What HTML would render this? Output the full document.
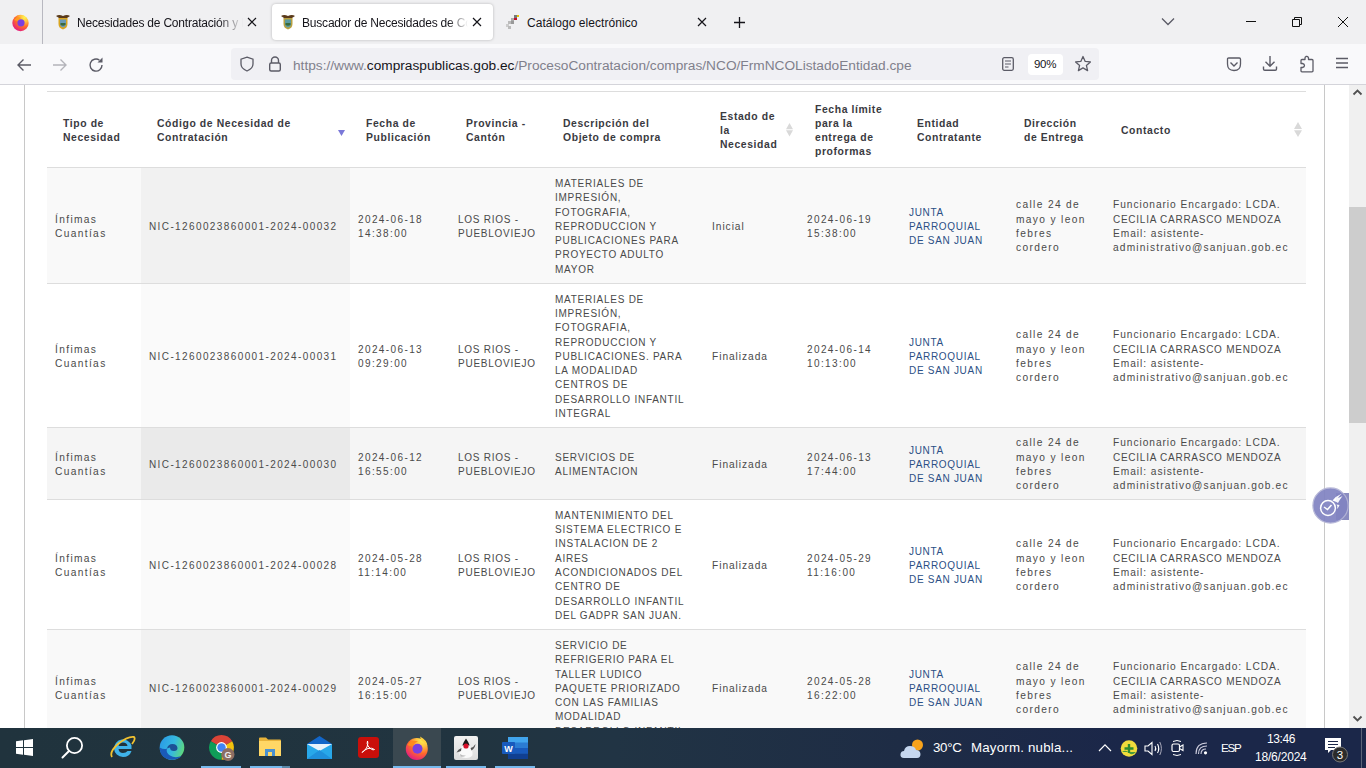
<!DOCTYPE html>
<html><head><meta charset="utf-8">
<style>
*{box-sizing:border-box}
html,body{margin:0;padding:0;width:1366px;height:768px;overflow:hidden;background:#fff;font-family:"Liberation Sans",sans-serif;position:relative}
.abs{position:absolute}
svg{display:block}
#tabs{left:0;top:0;width:1366px;height:44px;background:#f0f0f2}
#nav{left:0;top:44px;width:1366px;height:41px;background:#f9f9fb;border-bottom:1px solid #d4d4da}
.tabtxt{position:absolute;white-space:nowrap;font-size:12px;letter-spacing:-0.2px;color:#15141a;line-height:15px}
.urltxt{white-space:nowrap;font-size:13.7px;line-height:16px}
.ttxt{white-space:nowrap;color:#fff;line-height:15px}
#content{left:0;top:85px;width:1366px;height:643px;background:#fff;overflow:hidden}
#taskbar{left:0;top:728px;width:1366px;height:40px;background:linear-gradient(90deg,#20333d 0%,#213440 35%,#213444 45%,#1e2c45 66%,#1b2749 82%,#1b2749 100%)}
table{border-collapse:collapse;table-layout:fixed;position:absolute;left:47px;top:6px;width:1259px}
td,th{font-family:"Liberation Sans",sans-serif;vertical-align:middle;text-align:left;white-space:nowrap;padding:3px 0 0 8px;overflow:hidden}
th{font-weight:bold;font-size:10.4px;line-height:14.2px;color:#3a3a3f;letter-spacing:0.6px;padding-left:16px;position:relative}
td{font-size:10.2px;line-height:14.3px;color:#4a4a4a}
tr.h{height:76px;border-top:1px solid #ddd;border-bottom:1px solid #ddd}
tr.r{border-bottom:1px solid #ddd}
.odd td{background:#f9f9f9}
.odd td.s{background:#f1f1f1}
.even td{background:#fff}
.even td.s{background:#fafafa}
.hov td{background:#f5f5f5}
.hov td.s{background:#eaeaea}
.c{letter-spacing:0.75px;font-size:10px}
.d{letter-spacing:1.39px;font-size:10px}
.l{letter-spacing:0.95px}
.l2{letter-spacing:1.35px}
.l3{letter-spacing:1.15px}
.c2{letter-spacing:0.74px;font-size:10px}
.lnk{color:#2b4f85;letter-spacing:0.7px;font-size:10px}
.arr{position:absolute;width:0;height:0;border-left:3.5px solid transparent;border-right:3.5px solid transparent}
</style></head><body>

<div id="tabs" class="abs">
 <!-- firefox logo -->
 <svg class="abs" style="left:11px;top:13px" width="19" height="19" viewBox="0 0 19 19">
  <defs><radialGradient id="ffg" cx="0.75" cy="0.15" r="0.95"><stop offset="0" stop-color="#fff44f"/><stop offset="0.3" stop-color="#ffbd3f"/><stop offset="0.6" stop-color="#ff6a2a"/><stop offset="1" stop-color="#e31587"/></radialGradient></defs>
  <circle cx="9.5" cy="10" r="8.2" fill="url(#ffg)"/>
  <circle cx="10" cy="9.8" r="3.6" fill="#7a3fe0"/>
  <path d="M3 7Q6 3 10.5 5Q8 5.5 7 7.5Q5 8 3 7Z" fill="#ff9a1e"/>
 </svg>
 <div class="abs" style="left:42px;top:0;width:1px;height:44px;background:#b8b8c0"></div>
 <!-- tab1 -->
 <svg class="abs" style="left:55px;top:14px" width="16" height="16" viewBox="0 0 16 16">
  <path d="M1 2 Q4 0 8 2 Q12 0 15 2 L12 4 L4 4Z" fill="#5a3a1a"/>
  <path d="M3.5 4 H12.5 V10 Q12.5 14 8 15.5 Q3.5 14 3.5 10Z" fill="#d9a520"/>
  <path d="M5 5.5 H11 V10 Q11 12.5 8 13.5 Q5 12.5 5 10Z" fill="#6a9ab8"/>
  <path d="M5.5 9 H10.5 V11 Q8 12.5 5.5 11Z" fill="#3a6a3a"/>
 </svg>
 <div class="tabtxt" style="left:77px;top:16px;width:166px;overflow:hidden;-webkit-mask-image:linear-gradient(90deg,#000 85%,transparent 100%)">Necesidades de Contratación y Reportes</div>
 <svg class="abs" style="left:247px;top:17px" width="10" height="10" viewBox="0 0 10 10"><path d="M1 1L9 9M9 1L1 9" stroke="#15141a" stroke-width="1.2"/></svg>
 <!-- active tab -->
 <div class="abs" style="left:272px;top:4px;width:221px;height:36px;background:#fff;border-radius:4px;box-shadow:0 0 3px rgba(0,0,0,0.25)"></div>
 <svg class="abs" style="left:280px;top:14px" width="16" height="16" viewBox="0 0 16 16">
  <path d="M1 2 Q4 0 8 2 Q12 0 15 2 L12 4 L4 4Z" fill="#5a3a1a"/>
  <path d="M3.5 4 H12.5 V10 Q12.5 14 8 15.5 Q3.5 14 3.5 10Z" fill="#b8a040"/>
  <path d="M5 5.5 H11 V10 Q11 12.5 8 13.5 Q5 12.5 5 10Z" fill="#5a9aa0"/>
  <path d="M5.5 9 H10.5 V11 Q8 12.5 5.5 11Z" fill="#3a6a3a"/>
 </svg>
 <div class="tabtxt" style="left:302px;top:16px;width:166px;overflow:hidden;-webkit-mask-image:linear-gradient(90deg,#000 88%,transparent 100%)">Buscador de Necesidades de Contratación</div>
 <svg class="abs" style="left:472px;top:17px" width="10" height="10" viewBox="0 0 10 10"><path d="M1 1L9 9M9 1L1 9" stroke="#15141a" stroke-width="1.2"/></svg>
 <!-- tab3 -->
 <svg class="abs" style="left:505px;top:14px" width="16" height="16" viewBox="0 0 16 16">
  <rect x="9" y="1" width="3" height="3" fill="#777"/><rect x="12" y="1" width="2" height="2" fill="#e6c200"/>
  <rect x="6" y="4" width="3" height="3" fill="#aaa"/><rect x="9" y="4" width="3" height="2" fill="#c0102a"/>
  <rect x="3" y="7" width="3" height="3" fill="#bbb"/><rect x="6" y="7" width="3" height="3" fill="#999"/>
  <rect x="1" y="10" width="3" height="3" fill="#ccc"/><rect x="3" y="12" width="3" height="3" fill="#bbb"/>
 </svg>
 <div class="tabtxt" style="left:527px;top:16px;letter-spacing:0.05px">Catálogo electrónico</div>
 <svg class="abs" style="left:697px;top:17px" width="10" height="10" viewBox="0 0 10 10"><path d="M1 1L9 9M9 1L1 9" stroke="#15141a" stroke-width="1.2"/></svg>
 <svg class="abs" style="left:733px;top:16px" width="13" height="13" viewBox="0 0 13 13"><path d="M6.5 1V12M1 6.5H12" stroke="#15141a" stroke-width="1.3"/></svg>
 <!-- window controls -->
 <svg class="abs" style="left:1161px;top:17px" width="14" height="9" viewBox="0 0 14 9"><path d="M1 1.5L7 7.5L13 1.5" stroke="#5b5b66" stroke-width="1.3" fill="none"/></svg>
 <div class="abs" style="left:1246px;top:21px;width:10px;height:1px;background:#111"></div>
 <svg class="abs" style="left:1291px;top:16px" width="12" height="12" viewBox="0 0 12 12"><path d="M1.5 3.5H8.5V10.5H1.5Z M3.5 3.5V1.5H10.5V8.5H8.5" stroke="#111" stroke-width="1" fill="none"/></svg>
 <svg class="abs" style="left:1337px;top:16px" width="12" height="12" viewBox="0 0 12 12"><path d="M1 1L11 11M11 1L1 11" stroke="#111" stroke-width="1"/></svg>
</div>
<div id="nav" class="abs">
 <svg class="abs" style="left:16px;top:13px" width="16" height="16" viewBox="0 0 16 16"><path d="M15 8H2M7.5 2.5L2 8L7.5 13.5" stroke="#5b5b66" stroke-width="1.4" fill="none"/></svg>
 <svg class="abs" style="left:52px;top:13px" width="16" height="16" viewBox="0 0 16 16"><path d="M1 8H14M8.5 2.5L14 8L8.5 13.5" stroke="#b4b4ba" stroke-width="1.4" fill="none"/></svg>
 <svg class="abs" style="left:88px;top:13px" width="16" height="16" viewBox="0 0 16 16"><path d="M14 8A6 6 0 1 1 11.5 3.2" stroke="#5b5b66" stroke-width="1.4" fill="none"/><path d="M9.5 5.5L14.5 5.5L14.5 0.5Z" fill="#5b5b66"/></svg>
 <div class="abs" style="left:231px;top:4px;width:868px;height:32px;background:#f0f0f4;border-radius:4px"></div>
 <svg class="abs" style="left:239px;top:12px" width="16" height="16" viewBox="0 0 16 16"><path d="M8 1.2L14 3.2V8Q14 12.5 8 15Q2 12.5 2 8V3.2Z" stroke="#5b5b66" stroke-width="1.3" fill="none"/></svg>
 <svg class="abs" style="left:267px;top:11px" width="16" height="18" viewBox="0 0 16 18"><path d="M4.5 8V5.5A3.5 3.5 0 0 1 11.5 5.5V8" stroke="#5b5b66" stroke-width="1.4" fill="none"/><rect x="2.7" y="8" width="10.6" height="8" rx="1.5" stroke="#5b5b66" stroke-width="1.4" fill="none"/></svg>
 <div class="abs urltxt" style="left:293px;top:14px"><span style="color:#80808c">https://www.</span><span style="color:#15141a">compraspublicas.gob.ec</span><span style="color:#80808c">/ProcesoContratacion/compras/NCO/FrmNCOListadoEntidad.cpe</span></div>
 <svg class="abs" style="left:1001px;top:12px" width="14" height="16" viewBox="0 0 14 16"><rect x="1.7" y="1.7" width="10.6" height="12.6" rx="1.5" stroke="#5b5b66" stroke-width="1.3" fill="none"/><path d="M4 5H10M4 8H10M4 11H7.5" stroke="#5b5b66" stroke-width="1.2"/></svg>
 <div class="abs" style="left:1028px;top:10px;width:35px;height:21px;background:#fff;border-radius:4px"></div>
 <div class="abs" style="left:1034px;top:14px;font-size:11.5px;color:#15141a;letter-spacing:-0.3px">90%</div>
 <svg class="abs" style="left:1074px;top:11px" width="18" height="18" viewBox="0 0 18 18"><path d="M9 1.5L11.2 6.4L16.4 6.9L12.4 10.4L13.6 15.6L9 12.9L4.4 15.6L5.6 10.4L1.6 6.9L6.8 6.4Z" stroke="#5b5b66" stroke-width="1.3" fill="none" stroke-linejoin="round"/></svg>
 <svg class="abs" style="left:1226px;top:13px" width="16" height="15" viewBox="0 0 16 15"><path d="M1.5 2.2Q1.5 1 2.7 1H13.3Q14.5 1 14.5 2.2V7Q14.5 13.5 8 13.5Q1.5 13.5 1.5 7Z" stroke="#5b5b66" stroke-width="1.3" fill="none"/><path d="M4.5 5.5L8 9L11.5 5.5" stroke="#5b5b66" stroke-width="1.4" fill="none"/></svg>
 <svg class="abs" style="left:1262px;top:11px" width="16" height="17" viewBox="0 0 16 17"><path d="M8 1V11M3.5 6.8L8 11.3L12.5 6.8" stroke="#5b5b66" stroke-width="1.4" fill="none"/><path d="M1.5 11.5V14Q1.5 15.3 2.8 15.3H13.2Q14.5 15.3 14.5 14V11.5" stroke="#5b5b66" stroke-width="1.4" fill="none"/></svg>
 <svg class="abs" style="left:1299px;top:11px" width="16" height="18" viewBox="0 0 16 18"><path d="M7 1.5Q9 1 9.5 3V4.5H13Q14 4.5 14 5.5V16Q14 16.8 13 16.8H3Q2 16.8 2 16V12.5H3.5Q5.5 12 5.5 10.5Q5.5 9 3.5 8.5H2V5.5Q2 4.5 3 4.5H6V3Q6 2 7 1.5Z" stroke="#5b5b66" stroke-width="1.3" fill="none" stroke-linejoin="round"/></svg>
 <svg class="abs" style="left:1335px;top:13px" width="14" height="12" viewBox="0 0 14 12"><path d="M1 1.5H13M1 6H13M1 10.5H13" stroke="#5b5b66" stroke-width="1.3"/></svg>
</div>

<div id="content" class="abs">
 <div class="abs" style="left:24px;top:0;width:1px;height:643px;background:#c8c8c8"></div>
 <div class="abs" style="left:1324px;top:0;width:1px;height:643px;background:#c8c8c8"></div>
 <div class="abs" style="left:1349px;top:0;width:17px;height:643px;background:#f0f0f0"></div>
 <div class="abs" style="left:1349px;top:122px;width:17px;height:216px;background:#cdcdcd"></div>
 <svg class="abs" style="left:1352px;top:3px" width="11" height="8" viewBox="0 0 11 8"><path d="M1.5 6.5L5.5 2.5L9.5 6.5" stroke="#505050" stroke-width="1.8" fill="none"/></svg>
 <svg class="abs" style="left:1352px;top:630px" width="11" height="8" viewBox="0 0 11 8"><path d="M1.5 1.5L5.5 5.5L9.5 1.5" stroke="#505050" stroke-width="1.8" fill="none"/></svg>
<table>
<colgroup><col style="width:94px"><col style="width:209px"><col style="width:100px"><col style="width:97px"><col style="width:157px"><col style="width:95px"><col style="width:102px"><col style="width:107px"><col style="width:97px"><col style="width:201px"></colgroup>
<tr class="h">
<th>Tipo de<br>Necesidad</th>
<th>Código de Necesidad de<br>Contratación</th>
<th>Fecha de<br>Publicación</th>
<th>Provincia -<br>Cantón</th>
<th>Descripción del<br>Objeto de compra</th>
<th>Estado de<br>la<br>Necesidad</th>
<th>Fecha límite<br>para la<br>entrega de<br>proformas</th>
<th>Entidad<br>Contratante</th>
<th>Dirección<br>de Entrega</th>
<th>Contacto</th>
</tr>
<tr class="r odd" style="height:116px">
<td class="l2">Ínfimas<br>Cuantías</td>
<td class="s d">NIC-1260023860001-2024-00032</td>
<td class="d">2024-06-18<br>14:38:00</td>
<td class="c">LOS RIOS -<br>PUEBLOVIEJO</td>
<td class="c">MATERIALES DE<br>IMPRESIÓN,<br>FOTOGRAFIA,<br>REPRODUCCION Y<br>PUBLICACIONES PARA<br>PROYECTO ADULTO<br>MAYOR</td>
<td class="l">Inicial</td>
<td class="d">2024-06-19<br>15:38:00</td>
<td class="lnk">JUNTA<br>PARROQUIAL<br>DE SAN JUAN</td>
<td class="l2">calle 24 de<br>mayo y leon<br>febres<br>cordero</td>
<td class="l">Funcionario Encargado: LCDA.<br><span class="c2">CECILIA CARRASCO MENDOZA</span><br>Email: asistente-<br><span class="l3">administrativo@sanjuan.gob.ec</span></td>
</tr>
<tr class="r even" style="height:144px">
<td class="l2">Ínfimas<br>Cuantías</td>
<td class="s d">NIC-1260023860001-2024-00031</td>
<td class="d">2024-06-13<br>09:29:00</td>
<td class="c">LOS RIOS -<br>PUEBLOVIEJO</td>
<td class="c">MATERIALES DE<br>IMPRESIÓN,<br>FOTOGRAFIA,<br>REPRODUCCION Y<br>PUBLICACIONES. PARA<br>LA MODALIDAD<br>CENTROS DE<br>DESARROLLO INFANTIL<br>INTEGRAL</td>
<td class="l">Finalizada</td>
<td class="d">2024-06-14<br>10:13:00</td>
<td class="lnk">JUNTA<br>PARROQUIAL<br>DE SAN JUAN</td>
<td class="l2">calle 24 de<br>mayo y leon<br>febres<br>cordero</td>
<td class="l">Funcionario Encargado: LCDA.<br><span class="c2">CECILIA CARRASCO MENDOZA</span><br>Email: asistente-<br><span class="l3">administrativo@sanjuan.gob.ec</span></td>
</tr>
<tr class="r hov" style="height:72px">
<td class="l2">Ínfimas<br>Cuantías</td>
<td class="s d">NIC-1260023860001-2024-00030</td>
<td class="d">2024-06-12<br>16:55:00</td>
<td class="c">LOS RIOS -<br>PUEBLOVIEJO</td>
<td class="c">SERVICIOS DE<br>ALIMENTACION</td>
<td class="l">Finalizada</td>
<td class="d">2024-06-13<br>17:44:00</td>
<td class="lnk">JUNTA<br>PARROQUIAL<br>DE SAN JUAN</td>
<td class="l2">calle 24 de<br>mayo y leon<br>febres<br>cordero</td>
<td class="l">Funcionario Encargado: LCDA.<br><span class="c2">CECILIA CARRASCO MENDOZA</span><br>Email: asistente-<br><span class="l3">administrativo@sanjuan.gob.ec</span></td>
</tr>
<tr class="r even" style="height:130px">
<td class="l2">Ínfimas<br>Cuantías</td>
<td class="s d">NIC-1260023860001-2024-00028</td>
<td class="d">2024-05-28<br>11:14:00</td>
<td class="c">LOS RIOS -<br>PUEBLOVIEJO</td>
<td class="c">MANTENIMIENTO DEL<br>SISTEMA ELECTRICO E<br>INSTALACION DE 2<br>AIRES<br>ACONDICIONADOS DEL<br>CENTRO DE<br>DESARROLLO INFANTIL<br>DEL GADPR SAN JUAN.</td>
<td class="l">Finalizada</td>
<td class="d">2024-05-29<br>11:16:00</td>
<td class="lnk">JUNTA<br>PARROQUIAL<br>DE SAN JUAN</td>
<td class="l2">calle 24 de<br>mayo y leon<br>febres<br>cordero</td>
<td class="l">Funcionario Encargado: LCDA.<br><span class="c2">CECILIA CARRASCO MENDOZA</span><br>Email: asistente-<br><span class="l3">administrativo@sanjuan.gob.ec</span></td>
</tr>
<tr class="r odd" style="height:116px">
<td class="l2">Ínfimas<br>Cuantías</td>
<td class="s d">NIC-1260023860001-2024-00029</td>
<td class="d">2024-05-27<br>16:15:00</td>
<td class="c">LOS RIOS -<br>PUEBLOVIEJO</td>
<td class="c">SERVICIO DE<br>REFRIGERIO PARA EL<br>TALLER LUDICO<br>PAQUETE PRIORIZADO<br>CON LAS FAMILIAS<br>MODALIDAD<br>DESARROLLO INFANTIL</td>
<td class="l">Finalizada</td>
<td class="d">2024-05-28<br>16:22:00</td>
<td class="lnk">JUNTA<br>PARROQUIAL<br>DE SAN JUAN</td>
<td class="l2">calle 24 de<br>mayo y leon<br>febres<br>cordero</td>
<td class="l">Funcionario Encargado: LCDA.<br><span class="c2">CECILIA CARRASCO MENDOZA</span><br>Email: asistente-<br><span class="l3">administrativo@sanjuan.gob.ec</span></td>
</tr>
</table>
 <!-- sort arrows -->
 <svg class="abs" style="left:338px;top:45px" width="7" height="6" viewBox="0 0 7 6"><path d="M0 0H7L3.5 6Z" fill="#7a78d8"/></svg>
 <svg class="abs" style="left:786px;top:37.5px" width="7" height="14" viewBox="0 0 7 14"><path d="M3.5 0L7 6.3H0Z M0 7.3H7L3.5 13.5Z" fill="#d9d9d9"/></svg>
 <svg class="abs" style="left:1294px;top:36.5px" width="8" height="15" viewBox="0 0 8 15"><path d="M4 0L8 7H0Z M0 8.3H8L4 15Z" fill="#d9d9d9"/></svg>
 <!-- floating widget -->
 <div class="abs" style="left:1336px;top:408px;width:13px;height:27px;background:#8a8cc0"></div>
 <svg class="abs" style="left:1311.5px;top:402px;opacity:0.93" width="37" height="37" viewBox="0 0 37 37">
  <circle cx="18.5" cy="18.5" r="17.6" fill="#8284c2" stroke="#b4b5d6" stroke-width="1.2"/>
  <circle cx="16" cy="21" r="7.4" stroke="#fff" stroke-width="1.5" fill="none"/>
  <path d="M12 20L15.5 22.5L19.5 18" stroke="#fff" stroke-width="1.5" fill="none"/>
  <path d="M20.5 13.5Q24 9 30 6.5Q27 9 26 11Q29 10 30.5 9Q27.5 13 26 16Q24.5 14.5 20.5 13.5Z" fill="#fff"/>
  <path d="M24.5 17.5Q26 19 25 22Q27 20 27.5 18Z" fill="#fff"/>
 </svg>
</div>

<div id="taskbar" class="abs">
 <!-- windows logo -->
 <svg class="abs" style="left:16px;top:11px" width="17" height="17" viewBox="0 0 17 17"><path d="M0 2.3L7 1.3V8H0Z M8 1.2L17 0V8H8Z M0 9H7V15.7L0 14.7Z M8 9H17V17L8 15.8Z" fill="#fff"/></svg>
 <!-- search -->
 <svg class="abs" style="left:60px;top:8px" width="24" height="24" viewBox="0 0 24 24"><circle cx="14.5" cy="9.5" r="7.6" stroke="#fff" stroke-width="1.8" fill="none"/><path d="M9 15L2.5 21.5" stroke="#fff" stroke-width="2" stroke-linecap="round"/></svg>
 <!-- IE -->
 <svg class="abs" style="left:110px;top:7px" width="26" height="25" viewBox="0 0 26 25">
  <path d="M4 13.5A9 9 0 0 1 21.5 10.5V14H8.5Q9 18 13 18Q16 18 17.5 16H21.5Q19.5 22 13 22A9 9 0 0 1 4 13.5Z M8.6 11H17.5Q17 7.5 13 7.5Q9.2 7.5 8.6 11Z" fill="#3fb3ea"/>
  <path d="M2 22Q-1 17 8 9Q18 1 24 2Q26 4 22 9" stroke="#f2c230" stroke-width="1.8" fill="none"/>
 </svg>
 <!-- edge -->
 <svg class="abs" style="left:159px;top:7px" width="26" height="26" viewBox="0 0 26 26">
  <defs><linearGradient id="eg" x1="0" y1="0.3" x2="1" y2="0.6"><stop offset="0" stop-color="#2a9be6"/><stop offset="0.55" stop-color="#36b9e0"/><stop offset="1" stop-color="#5fd97a"/></linearGradient></defs>
  <circle cx="13" cy="12.5" r="12.3" fill="url(#eg)"/>
  <path d="M0.7 12.5Q1 24 13 24.8Q19 24.8 22.5 21Q16 23.5 11 20.5Q6.5 17.5 8 13.5Q5 15 0.7 12.5Z" fill="#1a5ab8"/>
  <path d="M8 13.5Q9 9 13.5 9Q18 9 18.5 13Q18.5 16 15 16Q11 16 11 12.5Q9 13 8 13.5Z" fill="#1c4f96"/>
 </svg>
 <!-- chrome -->
 <svg class="abs" style="left:209px;top:7px" width="27" height="27" viewBox="0 0 27 27">
  <path d="M12.5 12.5 L1.8 6.3 A12.3 12.3 0 0 1 23.2 6.3Z" fill="#db4437"/>
  <path d="M12.5 12.5 L23.2 6.3 A12.3 12.3 0 0 1 12.5 24.8Z" fill="#f4c20d"/>
  <path d="M12.5 12.5 L12.5 24.8 A12.3 12.3 0 0 1 1.8 6.3Z" fill="#0f9d58"/>
  <circle cx="12.5" cy="12.5" r="5.4" fill="#fff"/><circle cx="12.5" cy="12.5" r="4.2" fill="#4285f4"/>
  <circle cx="19" cy="19.5" r="6.5" fill="#8d6e63"/>
  <text x="19" y="22.8" font-size="9" font-family="Liberation Sans" font-weight="bold" fill="#eee" text-anchor="middle">G</text>
 </svg>
 <!-- explorer -->
 <svg class="abs" style="left:259px;top:9px" width="22" height="20" viewBox="0 0 22 20">
  <path d="M0 1.5Q0 0.5 1 0.5H7L9 2.5H21Q22 2.5 22 3.5V19H0Z" fill="#e8b33a"/>
  <rect x="0" y="4" width="22" height="15" fill="#ffd766"/>
  <path d="M6 19V12H16V19H13V15H9V19Z" fill="#4a90d0"/>
 </svg>
 <!-- mail -->
 <svg class="abs" style="left:307px;top:8px" width="25" height="24" viewBox="0 0 25 24">
  <path d="M0 8L12.5 0L25 8V23H0Z" fill="#1266c9"/>
  <rect x="0" y="8" width="25" height="15" fill="#28a8ea"/>
  <path d="M0 8L12.5 15L25 8Z" fill="#e8f2fb"/>
  <path d="M0 23L12.5 14L25 23Z" fill="#1f90dc"/>
 </svg>
 <!-- acrobat -->
 <svg class="abs" style="left:358px;top:9px" width="21" height="21" viewBox="0 0 21 21">
  <rect width="21" height="21" rx="3" fill="#c90f0a"/>
  <path d="M4 15.5Q5.5 13 10 11.5Q14 10.5 16.5 12.5Q14 14 10 9Q8.5 6.5 9.5 4Q10.5 5.5 9 10Q7 14 4 15.5Z" stroke="#fff" stroke-width="1" fill="none"/>
 </svg>
 <!-- firefox active -->
 <div class="abs" style="left:393px;top:0;width:48px;height:40px;background:#3a4850"></div>
 <svg class="abs" style="left:404px;top:7px" width="26" height="26" viewBox="0 0 26 26">
  <defs><radialGradient id="ffg2" cx="0.75" cy="0.1" r="1"><stop offset="0" stop-color="#fff44f"/><stop offset="0.3" stop-color="#ffbd3f"/><stop offset="0.6" stop-color="#ff6a2a"/><stop offset="1" stop-color="#e31587"/></radialGradient></defs>
  <circle cx="12.8" cy="14" r="11" fill="url(#ffg2)"/>
  <path d="M16 1.5Q23 5 23.5 11Q21 7 17.5 6Z" fill="#ffd23f"/>
  <circle cx="13.5" cy="13.8" r="5" fill="#7a3fe0"/>
  <path d="M3.5 10Q7 4 14 6.5Q10.5 7.5 9 10.5Q6 11.5 3.5 10Z" fill="#ff8a1e"/>
 </svg>
 <!-- java -->
 <svg class="abs" style="left:454px;top:8px" width="24" height="24" viewBox="0 0 24 24">
  <defs><linearGradient id="jg" x1="0" y1="0" x2="0" y2="1"><stop offset="0" stop-color="#f2f2f2"/><stop offset="1" stop-color="#dcdcdc"/></linearGradient></defs>
  <rect width="24" height="24" rx="2" fill="url(#jg)"/>
  <path d="M12 2.5Q9 7 7.5 11Q5 16 5.5 19Q7 22 12 22Q17 22 18.5 19Q19 16 16.5 11Q15 7 12 2.5Z" fill="#fafafa"/>
  <path d="M12 2.5Q9.5 6 8.3 9.5Q12 8.5 15.7 9.5Q14.5 6 12 2.5Z" fill="#1a1a1a"/>
  <circle cx="12" cy="10" r="2.6" fill="#d8102a"/>
  <path d="M7.5 12Q4 13 2.5 16.5Q5 15.5 7 15Z" fill="#555"/>
  <path d="M16.5 12Q20 11 21.5 8Q21 12 17.5 14.5Z" fill="#555"/>
  <path d="M6 18Q9 20 12 19.5Q9 21.5 6.5 20.5Z" fill="#bbb"/>
 </svg>
 <!-- word -->
 <svg class="abs" style="left:502px;top:9px" width="26" height="22" viewBox="0 0 26 22">
  <rect x="6" y="0" width="20" height="22" rx="1.5" fill="#2b7cd3"/>
  <rect x="6" y="0" width="20" height="5.5" fill="#41a5ee"/>
  <rect x="6" y="11" width="20" height="5.5" fill="#185abd"/>
  <rect x="6" y="16.5" width="20" height="5.5" fill="#103f91"/>
  <rect x="0" y="5" width="13" height="12" rx="1" fill="#185abd"/>
  <text x="6.5" y="14.5" font-size="9" font-weight="bold" font-family="Liberation Sans" fill="#fff" text-anchor="middle">W</text>
 </svg>
 <!-- underlines -->
 <div class="abs" style="left:201px;top:38px;width:40px;height:2px;background:#76b9ed"></div>
 <div class="abs" style="left:250px;top:38px;width:32px;height:2px;background:#76b9ed"></div>
 <div class="abs" style="left:282px;top:38px;width:8px;height:2px;background:#5a88a8"></div>
 <div class="abs" style="left:393px;top:38px;width:48px;height:2px;background:#76b9ed"></div>
 <div class="abs" style="left:446px;top:38px;width:40px;height:2px;background:#76b9ed"></div>
 <div class="abs" style="left:495px;top:38px;width:40px;height:2px;background:#76b9ed"></div>
 <!-- weather -->
 <svg class="abs" style="left:900px;top:10px" width="26" height="21" viewBox="0 0 26 21">
  <circle cx="17.5" cy="7" r="5.5" fill="#f7a21b"/>
  <path d="M4 20Q0 20 0.5 16Q1 13 4 13Q5 8 10 8Q15 8 16 12Q20 12 20.5 16Q20.5 20 17 20Z" fill="#c5d6ef"/>
 </svg>
 <div class="abs ttxt" style="left:933px;top:12px;font-size:13.3px;letter-spacing:-0.3px">30°C</div>
 <div class="abs ttxt" style="left:971px;top:12px;font-size:13.3px;letter-spacing:0.2px">Mayorm. nubla...</div>
 <svg class="abs" style="left:1098px;top:15px" width="14" height="9" viewBox="0 0 14 9"><path d="M1 8L7 1.8L13 8" stroke="#fff" stroke-width="1.2" fill="none"/></svg>
 <svg class="abs" style="left:1120px;top:12px" width="18" height="17" viewBox="0 0 18 17"><circle cx="9" cy="8.5" r="8.3" fill="#f0dc3c"/><path d="M2 12Q6 9 9 13Q12 16 16 12" fill="#4a9a3a"/><path d="M9 4V13M4.5 8.5H13.5" stroke="#2e8b2e" stroke-width="2.4"/></svg>
 <svg class="abs" style="left:1144px;top:13px" width="18" height="15" viewBox="0 0 18 15"><path d="M1 5H4L8 1.5V13.5L4 10H1Z" stroke="#fff" stroke-width="1.1" fill="none"/><path d="M11 5Q12.5 7.5 11 10M13.5 3Q16 7.5 13.5 12" stroke="#fff" stroke-width="1.1" fill="none"/><path d="M15.8 1Q19 7.5 15.8 14" stroke="#aab" stroke-width="1" fill="none"/></svg>
 <svg class="abs" style="left:1171px;top:11px" width="13" height="18" viewBox="0 0 13 18"><rect x="1" y="5" width="7.5" height="7.5" rx="1.5" stroke="#fff" stroke-width="1.2" fill="none"/><path d="M8.5 8L12 6V11.5L8.5 9.5" stroke="#fff" stroke-width="1.1" fill="none"/><path d="M2 2.5Q6 0.5 10 2.5M2 15.5Q6 17.5 10 15.5" stroke="#fff" stroke-width="1" fill="none"/></svg>
 <svg class="abs" style="left:1195px;top:14px" width="14" height="13" viewBox="0 0 14 13"><path d="M1 12Q1 1 12 1M3.5 12Q3.5 4 12 4M6 12Q6 7 11 7" stroke="#ccd" stroke-width="1.1" fill="none"/><circle cx="10.5" cy="10.8" r="1.6" fill="#fff"/></svg>
 <div class="abs ttxt" style="left:1221px;top:12px;font-size:11.6px;letter-spacing:-1.2px">ESP</div>
 <div class="abs ttxt" style="left:1267px;top:4px;font-size:12px;letter-spacing:-0.4px">13:46</div>
 <div class="abs ttxt" style="left:1255px;top:22px;font-size:12px;letter-spacing:-0.2px">18/6/2024</div>
 <svg class="abs" style="left:1323px;top:9px" width="28" height="27" viewBox="0 0 28 27"><path d="M2 1H18V13H8L5 16V13H2Z" fill="#fff"/><path d="M5 4.5H15M5 7.5H15M5 10.5H12" stroke="#1b2749" stroke-width="1.2"/><circle cx="17" cy="17.5" r="7.5" fill="#2b2b2b" stroke="#777" stroke-width="1"/><text x="17" y="21.6" font-size="11.5" font-family="Liberation Sans" fill="#fff" text-anchor="middle">3</text></svg>
 <div class="abs" style="left:1361px;top:0;width:1px;height:40px;background:#5a6478"></div>
</div>

</body></html>
